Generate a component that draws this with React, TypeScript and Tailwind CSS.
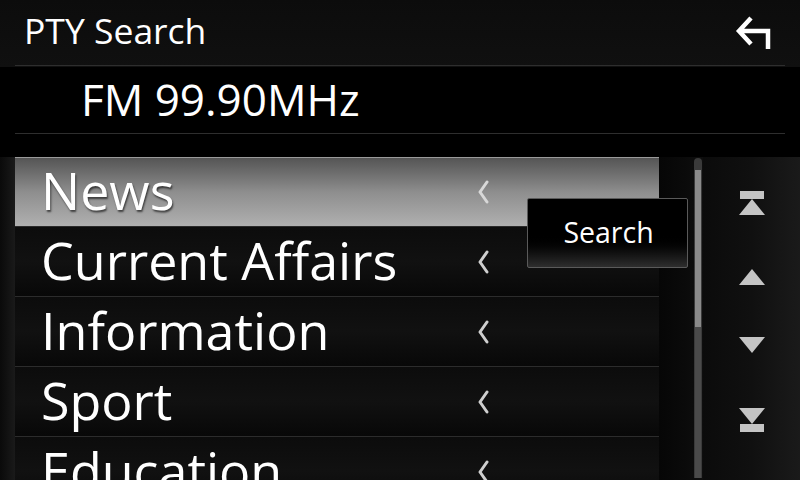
const font = { fontFamily: '"Open Sans", "Noto Sans", sans-serif' };

const genres = ['News', 'Current Affairs', 'Information', 'Sport', 'Education'];

const Chevron = ({ light }: { light?: boolean }) => (
  <svg width="12" height="24" viewBox="0 0 12 24" className="shrink-0">
    <path
      d="M10 2 L3 12 L10 22"
      fill="none"
      stroke={light ? '#d8d8d8' : '#cfcfcf'}
      strokeWidth="3"
      strokeLinecap="round"
      strokeLinejoin="round"
    />
  </svg>
);

const BackIcon = () => (
  <svg width="40" height="40" viewBox="0 0 40 40">
    <path
      d="M17 3 L5 16 L17 29 M5 16 H34 V34"
      fill="none"
      stroke="#ffffff"
      strokeWidth="4.5"
      strokeLinejoin="miter"
    />
  </svg>
);

const Tri = ({ up }: { up?: boolean }) => (
  <svg width="26" height="16" viewBox="0 0 26 16">
    <polygon points={up ? '13,0 26,16 0,16' : '0,0 26,0 13,16'} fill="#c4c4c4" />
  </svg>
);

const App = () => {
  return (
    <div
      className="relative w-[800px] h-[480px] overflow-hidden bg-black text-white flex flex-col"
      style={font}
    >
      {/* header */}
      <div className="h-[67px] shrink-0 bg-gradient-to-b from-[#0c0c0c] to-[#101010]">
        <div className="mx-[15px] h-[66px] border-b border-[#2e2e2e] flex items-center justify-between">
          <span className="pl-[9px] text-[35.5px] leading-none pb-[3px]">PTY Search</span>
          <div className="mr-[11px] mt-[4px]">
            <BackIcon />
          </div>
        </div>
      </div>

      {/* frequency */}
      <div className="h-[67px] shrink-0 bg-black">
        <div className="mx-[15px] h-[67px] border-b border-[#2e2e2e] flex items-center">
          <span className="pl-[66px] text-[44px] leading-none pb-[2px]">FM 99.90MHz</span>
        </div>
      </div>

      {/* list area */}
      <div className="flex flex-1 pt-[23px] bg-gradient-to-b from-black via-[#080808] to-[#0c0c0c]">
        <div className="w-[15px] shrink-0 bg-gradient-to-r from-[#0a0a0a] to-[#1a1a1a]" />
        <div className="w-[644px] shrink-0 flex flex-col">
          {genres.map((g, i) => (
            <div
              key={g}
              className={
                i === 0
                  ? 'h-[70px] shrink-0 flex items-center border-t border-[#9a9a9a] border-b border-b-[#2a2a2a] bg-gradient-to-b from-[#555555] via-[#8e8e8e] to-[#b0b0b0]'
                  : 'h-[70px] shrink-0 flex items-center border-b border-[#2c2c2c] bg-gradient-to-b from-[#0c0c0c] via-[#111111] to-[#080808]'
              }
            >
              <span
                className={
                  i === 0
                    ? 'flex-1 pl-[26px] text-[52px] leading-none pb-[4px] whitespace-nowrap [text-shadow:1px_2px_2px_rgba(0,0,0,0.6)]'
                    : 'flex-1 pl-[26px] text-[52px] leading-none pb-[4px] whitespace-nowrap'
                }
              >
                {g}
              </span>
              <div className="pr-[170px]">
                <Chevron light={i === 0} />
              </div>
            </div>
          ))}
        </div>

        {/* scrollbar */}
        <div className="w-[44px] shrink-0 pl-[35px] bg-gradient-to-r from-[#060606] to-[#0e0e0e]">
          <div className="mt-[1px] w-[8px] h-[320px] rounded-t-sm bg-[#3a3a3a] flex flex-col items-center">
            <div className="mt-[12px] w-[6px] h-[157px] bg-[#8a8a8a]" />
            <div className="w-[6px] flex-1 bg-[#4a4a4a]" />
          </div>
        </div>

        {/* buttons */}
        <div className="flex-1 flex flex-col items-center pt-[34px] bg-gradient-to-r from-[#0b0b0b] via-[#101010] to-[#1a1a1a]">
          <div className="flex flex-col items-center">
            <div className="w-[24px] h-[8px] bg-[#c4c4c4]" />
            <Tri up />
          </div>
          <div className="mt-[54px]">
            <Tri up />
          </div>
          <div className="mt-[52px]">
            <Tri />
          </div>
          <div className="mt-[55px] flex flex-col items-center">
            <Tri />
            <div className="w-[24px] h-[8px] bg-[#c4c4c4]" />
          </div>
        </div>
      </div>

      {/* search popup */}
      <div className="absolute left-[527px] top-[198px] w-[161px] h-[70px] border border-[#5a5a5a] rounded-[2px] bg-gradient-to-b from-black via-black to-[#2e2e2e] flex items-center justify-center">
        <span className="text-[28.5px] leading-none pb-[1px] pl-[2px]">Search</span>
      </div>
    </div>
  );
};

export default App;
